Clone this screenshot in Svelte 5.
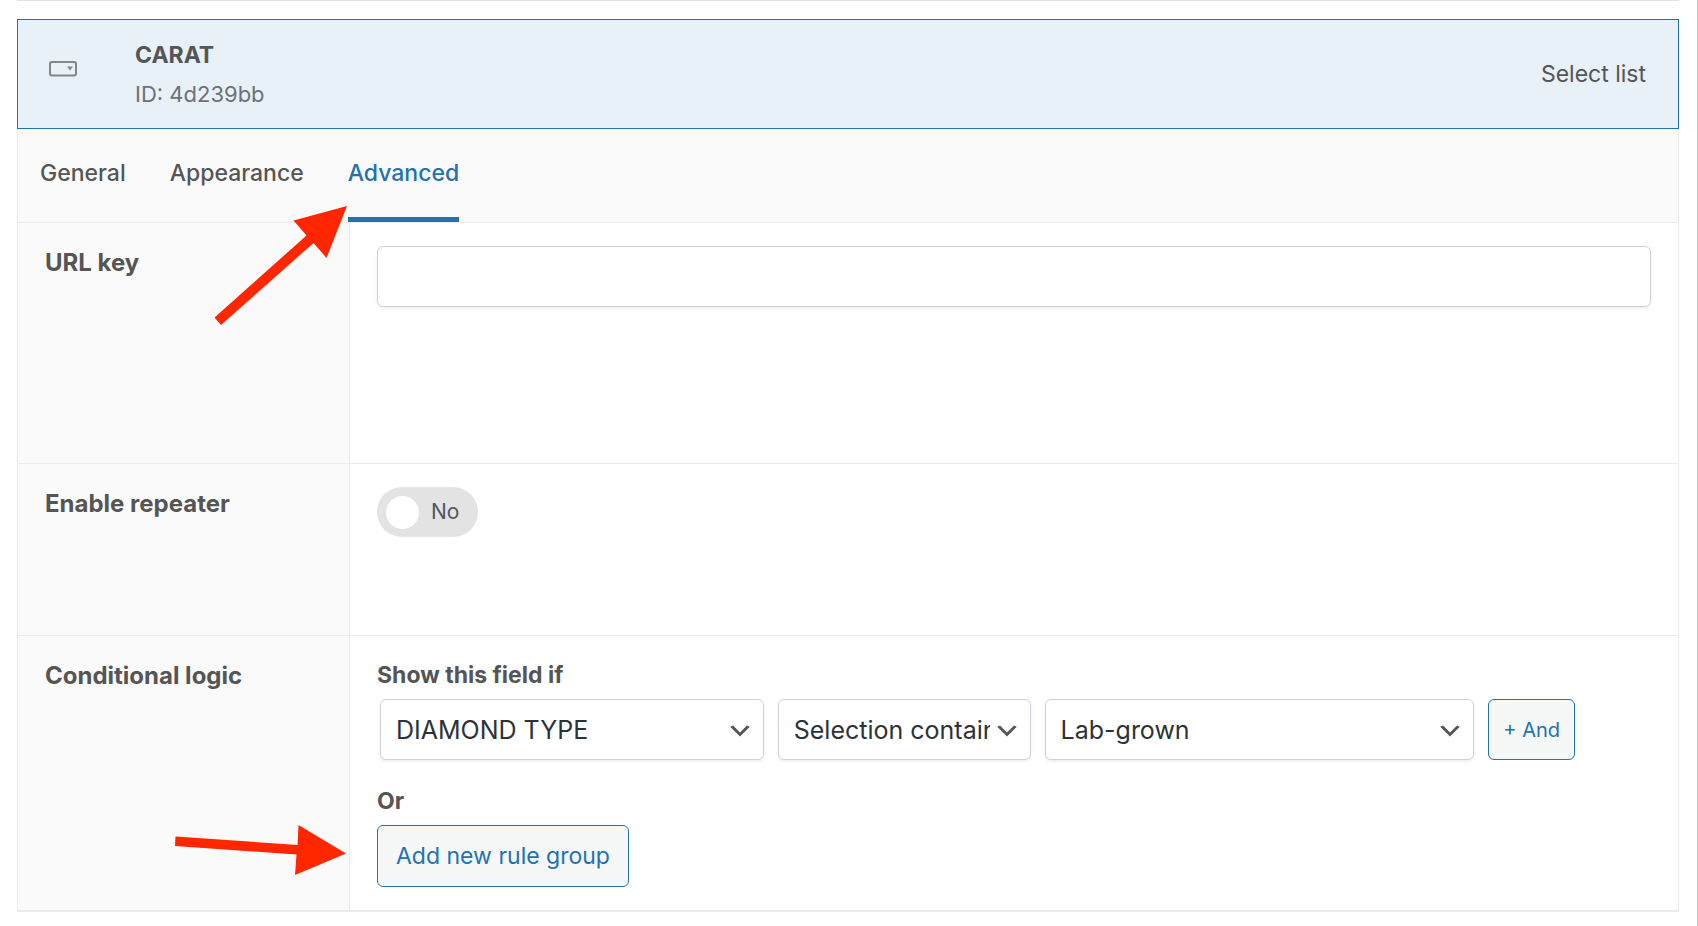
<script>
    let activeTab = 'Advanced';
    let urlKey = '';
    let repeater = false;
    let rule = {
        field: 'DIAMOND TYPE',
        condition: 'Selection contains',
        value: 'Lab-grown',
    };

    const tabs = ['General', 'Appearance', 'Advanced'];
</script>

<div class="page">
    <div class="field">
        <header class="field-header">
            <svg class="field-icon" width="28" height="16" viewBox="0 0 28 16" aria-hidden="true">
                <rect x="1" y="1" width="26" height="13.5" rx="2" fill="none" stroke="#828689" stroke-width="2" />
                <path d="M18 5.5h6l-3 4z" fill="#828689" />
            </svg>
            <div class="field-title">
                <strong>CARAT</strong>
                <span>ID: 4d239bb</span>
            </div>
            <span class="field-type">Select list</span>
        </header>

        <nav class="tabs">
            {#each tabs as tab}
                <button class="tab" class:active={tab === activeTab} on:click={() => (activeTab = tab)}>{tab}</button>
            {/each}
            <svg class="arrow arrow-tab" width="134" height="120" viewBox="0 0 134 120" aria-hidden="true">
                <path d="M133 0L79.500 14.500L92.500 29.500L0.500 111.500L7 119L99.500 37L112.500 52Z" fill="#ff2600" />
            </svg>
        </nav>

        <div class="row url-row">
            <div class="row-label"><label for="url-key">URL key</label></div>
            <div class="row-content">
                <input class="text-input" id="url-key" type="text" bind:value={urlKey} />
            </div>
        </div>

        <div class="row repeater-row">
            <div class="row-label"><label for="repeater">Enable repeater</label></div>
            <div class="row-content">
                <label class="toggle" class:on={repeater}>
                    <input id="repeater" type="checkbox" bind:checked={repeater} />
                    <span class="knob"></span>
                    <span class="toggle-text">{repeater ? 'Yes' : 'No'}</span>
                </label>
            </div>
        </div>

        <div class="row logic-row">
            <div class="row-label">Conditional logic</div>
            <div class="row-content">
                <div class="caption">Show this field if</div>
                <div class="rule">
                    <select aria-label="Field" bind:value={rule.field}>
                        <option>DIAMOND TYPE</option>
                    </select>
                    <select aria-label="Condition" bind:value={rule.condition}>
                        <option>Selection contains</option>
                    </select>
                    <select aria-label="Value" bind:value={rule.value}>
                        <option>Lab-grown</option>
                    </select>
                    <button class="button small">+ And</button>
                </div>
                <div class="caption">Or</div>
                <div class="add-group">
                    <button class="button">Add new rule group</button>
                    <svg class="arrow arrow-group" width="172" height="50" viewBox="0 0 172 50" aria-hidden="true">
                        <path d="M171 28.500L123.500 0L122.500 20L0.500 11.500L0 21L121.500 29.500L120 50Z" fill="#ff2600" />
                    </svg>
                </div>
            </div>
        </div>
    </div>
</div>

<style>
    :global(body) {
        background: #fff;
    }

    .page {
        box-sizing: border-box;
        min-height: 100vh;
        padding: 0 18px 0 17px;
        border-right: 1px solid #c3c4c7;
        font-family: Inter, 'Liberation Sans', sans-serif;
        font-size: 23px;
        line-height: 28px;
        color: #555;
    }

    .page::before {
        content: '';
        display: block;
        height: 1px;
        margin-bottom: 18px;
        background: #e1e1e1;
    }

    .field-header {
        box-sizing: border-box;
        display: flex;
        align-items: center;
        height: 110px;
        padding: 0 32px 0 31px;
        border: 1px solid #2271b1;
        background: #e8f0f8;
    }

    .field-icon {
        margin-bottom: 10px;
    }

    .field-title {
        display: flex;
        flex: 1;
        flex-direction: column;
        gap: 11px;
        margin-left: 58px;
    }

    .field-title span {
        font-size: 22px;
        color: #6d7175;
    }

    .tabs {
        position: relative;
        display: flex;
        gap: 44px;
        height: 93px;
        padding: 0 22px;
        border: 1px solid #ebebeb;
        border-top: 0;
        background: #fafafa;
    }

    .tab {
        padding: 0;
        border: 0;
        border-bottom: 5px solid transparent;
        background: none;
        font: inherit;
        font-weight: 500;
        color: inherit;
        cursor: pointer;
    }

    .tab.active {
        border-color: #2271b1;
        color: #2271b1;
    }

    .row {
        display: grid;
        grid-template-columns: 332px 1fr;
        border: 1px solid #ebebeb;
        border-top: 0;
    }

    .row-label {
        padding: 26px 27px;
        border-right: 1px solid #ebebeb;
        background: #fafafa;
        font-size: 24px;
        font-weight: 700;
    }

    .row-content {
        padding: 23px 27px;
    }

    .url-row {
        min-height: 240px;
    }

    .repeater-row {
        min-height: 171px;
    }

    .logic-row {
        border-bottom-width: 2px;
    }

    .text-input,
    select {
        box-sizing: border-box;
        width: 100%;
        height: 61px;
        border: 1px solid #ced1dc;
        border-radius: 6px;
        background-color: #fff;
        box-shadow: 0 2px 3px rgba(0, 0, 0, 0.06);
        font: inherit;
        color: #2c3338;
    }

    .text-input {
        display: block;
        padding: 0 16px;
    }

    select {
        appearance: none;
        min-width: 0;
        padding: 0 40px 0 15px;
        background-image: url("data:image/svg+xml,%3Csvg xmlns='http://www.w3.org/2000/svg' viewBox='0 0 20 20'%3E%3Cpath d='M5 6l5 5 5-5 2 1-7 7-7-7 2-1z' fill='%23555'/%3E%3C/svg%3E");
        background-repeat: no-repeat;
        background-position: right 9px top 17px;
        background-size: 28px 28px;
        font-size: 25px;
    }

    .toggle {
        display: inline-flex;
        align-items: center;
        gap: 12px;
        box-sizing: border-box;
        height: 50px;
        padding: 0 19px 0 9px;
        border-radius: 25px;
        background: #e3e3e3;
        font-size: 21px;
        color: #50575e;
        cursor: pointer;
    }

    .toggle input {
        position: absolute;
        opacity: 0;
    }

    .toggle.on {
        flex-direction: row-reverse;
        background: #2271b1;
        color: #fff;
    }

    .knob {
        width: 33px;
        height: 33px;
        border-radius: 50%;
        background: #fff;
    }

    .caption {
        padding: 2px 0 10px;
        font-weight: 700;
    }

    .rule {
        display: grid;
        grid-template-columns: 384fr 253fr 430fr auto;
        gap: 14px;
        margin: 0 76px 25px 3px;
    }

    .button {
        box-sizing: border-box;
        height: 62px;
        padding: 0 18px;
        border: 1px solid #2271b1;
        border-radius: 6px;
        background: #f6f7f7;
        font: inherit;
        color: #2271b1;
        cursor: pointer;
    }

    .button.small {
        height: 61px;
        padding: 0 14px;
        font-size: 20px;
    }

    .add-group {
        position: relative;
        width: fit-content;
    }

    .arrow {
        position: absolute;
        pointer-events: none;
    }

    .arrow-tab {
        top: 77px;
        left: 196px;
    }

    .arrow-group {
        top: 0;
        right: calc(100% + 30px);
    }
</style>
